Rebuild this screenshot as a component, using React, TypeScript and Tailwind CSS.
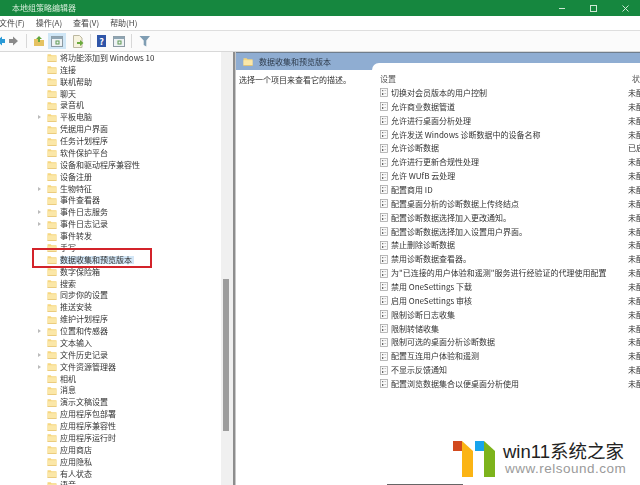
const tree: [string, boolean][] = [
  ["将功能添加到 Windows 10", false],["连接", false],["联机帮助", false],["聊天", false],["录音机", false],["平板电脑", true],["凭据用户界面", false],["任务计划程序", false],["软件保护平台", false],["设备和驱动程序兼容性", false],["设备注册", false],["生物特征", true],["事件查看器", false],["事件日志服务", true],["事件日志记录", true],["事件转发", false],["手写", false],["数据收集和预览版本", false],["数字保险箱", false],["搜索", false],["同步你的设置", false],["推送安装", false],["维护计划程序", false],["位置和传感器", true],["文本输入", false],["文件历史记录", true],["文件资源管理器", true],["相机", false],["消息", false],["演示文稿设置", false],["应用程序包部署", false],["应用程序兼容性", false],["应用程序运行时", false],["应用商店", false],["应用隐私", false],["有人状态", false],["语音", false],
];

const policies = [
  "切换对会员版本的用户控制","允许商业数据管道","允许进行桌面分析处理","允许发送 Windows 诊断数据中的设备名称","允许诊断数据","允许进行更新合规性处理","允许 WUfB 云处理","配置商用 ID","配置桌面分析的诊断数据上传终结点","配置诊断数据选择加入更改通知。","配置诊断数据选择加入设置用户界面。","禁止删除诊断数据","禁用诊断数据查看器。","为\"已连接的用户体验和遥测\"服务进行经验证的代理使用配置","禁用 OneSettings 下载","启用 OneSettings 审核","限制诊断日志收集","限制转储收集","限制可选的桌面分析诊断数据","配置互连用户体验和遥测","不显示反馈通知","配置浏览数据集合以便桌面分析使用",
];

const font = "font-['Noto_Sans_CJK_SC','Noto_Sans',sans-serif]";
const wm = "font-['Liberation_Sans','Noto_Sans_CJK_SC',sans-serif]";

function Folder({ className = "" }: { className?: string }) {
  return (
    <svg width="10" height="9" viewBox="0 0 10 9" className={className}>
      <path d="M0.5 1.2 h3.2 l0.8 1 h5 v6.3 h-9z" fill="#f6d67e" />
      <path d="M0.5 3.2 h9 v5.3 h-9z" fill="#fbe7a8" />
      <path d="M0.5 8.5 h9" stroke="#e0b95a" strokeWidth="0.6" />
    </svg>
  );
}

function PolicyIcon() {
  return (
    <svg width="8" height="9" viewBox="0 0 8 9" className="shrink-0">
      <rect x="0.5" y="0.5" width="7" height="8" fill="#fafafa" stroke="#a8a8a8" strokeWidth="0.8" />
      <rect x="2" y="2" width="1.3" height="1.3" fill="#777" />
      <rect x="2" y="5" width="1.3" height="2" fill="#666" />
      <path d="M4.5 2.5 h1.6 M4.5 5.5 h1.6" stroke="#b5b5b5" strokeWidth="0.8" />
    </svg>
  );
}

function Toolbar() {
  return (
    <div className="flex h-[21px] shrink-0 items-center bg-[#fbfbfb] border-b border-[#d8d8d8]">
      <svg width="26" height="12" viewBox="0 0 26 12" className="-ml-[3px]">
        <path d="M0 6 L5 1.5 V4 H8 V8 H5 V10.5Z" fill="#2a9ad6" />
        <path d="M21 6 L16 1.5 V4 H12 V8 H16 V10.5Z" fill="#8a8a8a" />
      </svg>
      <div className="ml-[3px] mr-[6px] h-[14px] w-px bg-[#d8d8d8]" />
      <svg width="12" height="12" viewBox="0 0 12 12">
        <path d="M1 4 h4 l1 1 h5 v6 h-10z" fill="#e5c261" />
        <path d="M6 1 L9 4 H7 V7 H5 V4 H3Z" fill="#62a63d" />
      </svg>
      <div className="ml-[3px] flex h-[16px] w-[18px] items-center justify-center bg-[#cfe6f6]">
        <svg width="12" height="11" viewBox="0 0 12 11">
          <rect x="0.5" y="0.5" width="11" height="10" fill="#eef2f4" stroke="#8c9aa3" />
          <rect x="0.5" y="0.5" width="11" height="2.5" fill="#8fa5b3" />
          <rect x="5" y="5" width="3" height="3" fill="none" stroke="#5f9a55" />
        </svg>
      </div>
      <svg width="12" height="13" viewBox="0 0 12 13" className="ml-[6px]">
        <path d="M1.5 .5 h6 l2.5 2.5 v9.5 h-8.5z" fill="#f7f3df" stroke="#bcb8a0" />
        <path d="M5 7 h3 V5 l3.5 3 -3.5 3 V9 H5z" fill="#6cab3e" />
      </svg>
      <div className="ml-[6px] mr-[6px] h-[14px] w-px bg-[#d8d8d8]" />
      <div className="flex h-[12px] w-[9px] items-center justify-center bg-[#2f55a8] text-[9px] font-bold leading-none text-white">?</div>
      <svg width="12" height="11" viewBox="0 0 12 11" className="ml-[7px]">
        <rect x="0.5" y="0.5" width="11" height="10" fill="#eef2f4" stroke="#8c9aa3" />
        <rect x="0.5" y="0.5" width="11" height="2.5" fill="#8fa5b3" />
        <rect x="5" y="5" width="3" height="3" fill="none" stroke="#5f9a55" />
      </svg>
      <div className="ml-[6px] mr-[7px] h-[14px] w-px bg-[#d8d8d8]" />
      <svg width="12" height="12" viewBox="0 0 12 12">
        <path d="M0.5 1 H11 L7.3 5.5 V11.5 L4.7 10 V5.5Z" fill="#7f9db3" />
      </svg>
    </div>
  );
}

function Logo() {
  return (
    <svg width="42" height="37" viewBox="0 0 42 37">
      <rect x="0" y="0" width="9" height="10" fill="#d24a1e" />
      <path d="M9 0 L20 10 V36 H9Z" fill="#fbb414" />
      <rect x="22" y="0" width="9" height="10" fill="#18a4ec" />
      <path d="M31 0 L42 10 V36 H31Z" fill="#7db31b" />
    </svg>
  );
}

export default function App() {
  return (
    <div className={`relative flex h-[485px] w-[640px] flex-col overflow-hidden bg-white text-[#333] ${font}`}>
      <div className="flex h-[16px] shrink-0 items-center justify-between bg-[#16873f] pl-[12px] pr-[11px] text-[8px] text-[#d5ecd9]">
        <span className="blur-[0.3px]">本地组策略编辑器</span>
        <div className="flex items-center gap-[25px]">
          <div className="h-px w-[6px] bg-[#cfe8d4]" />
          <div className="h-[7px] w-[7px] border border-[#cfe8d4]" />
          <svg width="7" height="7" viewBox="0 0 7 7"><path d="M0.5 0.5 L6.5 6.5 M6.5 0.5 L0.5 6.5" stroke="#cfe8d4" strokeWidth="1" /></svg>
        </div>
      </div>
      <div className="flex h-[15px] shrink-0 items-center gap-[11px] bg-white -ml-[1px] text-[8px] text-[#444] border-b border-[#dedede]">
        <span className="blur-[0.3px]">文件(F)</span>
        <span className="blur-[0.3px]">操作(A)</span>
        <span className="blur-[0.3px]">查看(V)</span>
        <span className="blur-[0.3px]">帮助(H)</span>
      </div>
      <Toolbar />
      <div className="flex min-h-0 flex-1">
        <div className="flex w-[221px] shrink-0 flex-col overflow-hidden">
          {tree.map(([name, arrow]) => {
            const selected = name === "数据收集和预览版本";
            return (
              <div key={name} className="flex h-[11.886px] shrink-0 items-center text-[8px] leading-none">
                <div className="flex w-[47px] shrink-0 justify-end pr-[6px]">
                  {arrow && <div className="h-0 w-0 border-y-[2px] border-l-[3px] border-y-transparent border-l-[#bbb]" />}
                </div>
                <Folder className="shrink-0" />
                <span className={`ml-[3px] whitespace-nowrap pr-[2px] blur-[0.25px] ${selected ? "bg-[#d3e7f7]" : ""}`}>{name}</span>
              </div>
            );
          })}
        </div>
        <div className="flex w-[12px] shrink-0 flex-col bg-[#f0f0f0] pt-[227px] pl-[2px]">
          <div className="h-[152px] w-[6px] bg-[#9d9d9d]" />
        </div>
        <div className="w-[2px] shrink-0 bg-[#8d8d8d]" />
        <div className="flex min-w-0 flex-1 flex-col border-l border-[#c8c8c8]">
          <div className="flex h-[18px] shrink-0 items-center gap-[6px] bg-[#8fadd2] pl-[7px] text-[8px] text-[#2d3a4a] border-t border-[#6f7d8c]">
            <Folder />
            <span className="blur-[0.25px]">数据收集和预览版本</span>
          </div>
          <div className="flex flex-1">
            <div className="w-[136px] shrink-0 pt-[4px] pl-[3px] text-[8px] text-[#333]">
              <span className="blur-[0.25px]">选择一个项目来查看它的描述。</span>
            </div>
            <div className="-mt-[7px] flex-1 rounded-tl-[7px] bg-white pl-[8px]">
              <div className="flex h-[20px] items-end text-[8px] leading-none text-[#555]">
                <span className="w-[252px] blur-[0.25px]">设置</span>
                <span className="blur-[0.25px] whitespace-nowrap">状态</span>
              </div>
              <div className="mt-[3px] flex flex-col">
                {policies.map((p, i) => (
                  <div key={p} className="flex h-[13.86px] items-center text-[8px] leading-none">
                    <PolicyIcon />
                    <span className="ml-[3px] w-[233px] whitespace-nowrap blur-[0.25px]">{p}</span>
                    <span className="ml-[4px] whitespace-nowrap blur-[0.25px]">{i === 4 ? "已启用" : "未配置"}</span>
                  </div>
                ))}
              </div>
            </div>
          </div>
        </div>
      </div>

      {/* red annotation */}
      <div className="absolute left-[32px] top-[248px] h-[20px] w-[120px] border-[2px] border-[#d3232a]" />

      {/* watermark */}
      <div className="absolute bottom-[1px] left-[448px] flex h-[50px] w-[192px] items-center bg-white pl-[5px]">
        <Logo />
        <div className="ml-[8px] flex flex-col">
          <span className={`whitespace-nowrap text-[18.5px] leading-[20px] text-[#222] ${wm}`}>win11系统之家</span>
          <span className={`ml-[2px] whitespace-nowrap text-[13.5px] leading-[14px] tracking-[0.5px] text-[#9a9a9a] ${wm}`}>www.relsound.com</span>
        </div>
      </div>
      <div className="absolute bottom-0 left-[387px] h-px w-[76px] bg-[#666]" />
    </div>
  );
}
